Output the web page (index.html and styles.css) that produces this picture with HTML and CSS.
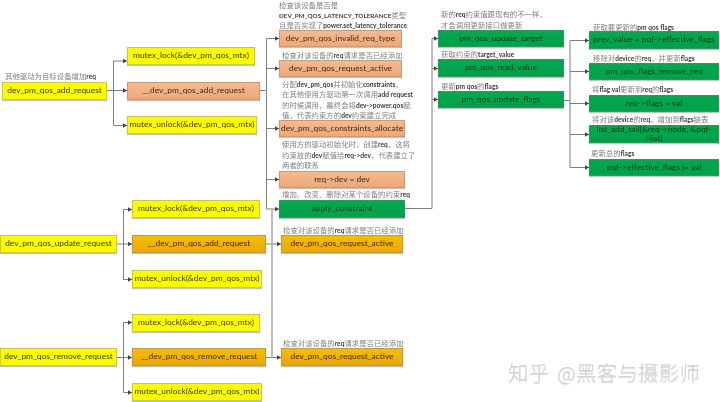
FILE: index.html
```html
<!DOCTYPE html>
<html lang="zh">
<head>
<meta charset="utf-8">
<title>dev_pm_qos</title>
<link rel="stylesheet" href="styles.css">
</head>
<body>
<main class="canvas">
  <svg class="wires" width="720" height="402" viewBox="0 0 720 402">
    <defs>
      <marker id="arrow" markerUnits="userSpaceOnUse" markerWidth="5" markerHeight="5" refX="4" refY="2.5" orient="auto">
        <path d="M0 0.3L4 2.5L0 4.7Z" fill="#404040"/>
      </marker>
    </defs>
    <g class="wire">
      <path d="M107 90.5H113.500"/>
      <path d="M113.500 90.500H127" marker-end="url(#arrow)"/>
      <path d="M113.500 61V125" />
      <path d="M113.500 61H127" marker-end="url(#arrow)"/>
      <path d="M113.500 125.500H127" marker-end="url(#arrow)"/>
      <path d="M260 90.500H266.500"/>
      <path d="M266.500 38.500V209"/>
      <path d="M266.500 38.500H279" marker-end="url(#arrow)"/>
      <path d="M266.500 68.500H279" marker-end="url(#arrow)"/>
      <path d="M266.500 128.500H279" marker-end="url(#arrow)"/>
      <path d="M266.500 179.500H279" marker-end="url(#arrow)"/>
      <path d="M266.500 209H279" marker-end="url(#arrow)"/>
      <path d="M405 208.500H432V38.500"/>
      <path d="M432 38.500H438" marker-end="url(#arrow)"/>
      <path d="M432 68.500H438" marker-end="url(#arrow)"/>
      <path d="M432 99.500H438" marker-end="url(#arrow)"/>
      <path d="M563 100.500H570"/>
      <path d="M570 40.500V167.500"/>
      <path d="M570 40.500H589" marker-end="url(#arrow)"/>
      <path d="M570 71.500H589" marker-end="url(#arrow)"/>
      <path d="M570 103.500H589" marker-end="url(#arrow)"/>
      <path d="M570 134.500H589" marker-end="url(#arrow)"/>
      <path d="M570 167.500H589" marker-end="url(#arrow)"/>
      <path d="M117 244H123.500"/>
      <path d="M123.500 209.500V279.500"/>
      <path d="M123.500 209.500H132" marker-end="url(#arrow)"/>
      <path d="M123.500 244H132" marker-end="url(#arrow)"/>
      <path d="M123.500 279.500H132" marker-end="url(#arrow)"/>
      <path d="M117 357.500H123.500"/>
      <path d="M123.500 322.500V392.500"/>
      <path d="M123.500 322.500H132" marker-end="url(#arrow)"/>
      <path d="M123.500 357.500H132" marker-end="url(#arrow)"/>
      <path d="M123.500 392.500H132" marker-end="url(#arrow)"/>
      <path d="M266 244H281" marker-end="url(#arrow)"/>
      <path d="M266 357.500H281" marker-end="url(#arrow)"/>
      <path class="wire-light" d="M272 209V357.500"/>
    </g>
  </svg>

  <div class="node yellow n-add">dev_pm_qos_add_request</div>
  <div class="node yellow n-lock1">mutex_lock(&amp;dev_pm_qos_mtx)</div>
  <div class="node salmon n-inner1">__dev_pm_qos_add_request</div>
  <div class="node yellow n-unlock1">mutex_unlock(&amp;dev_pm_qos_mtx)</div>

  <div class="node salmon n-invalid">dev_pm_qos_invalid_req_type</div>
  <div class="node salmon n-active1">dev_pm_qos_request_active</div>
  <div class="node salmon n-alloc">dev_pm_qos_constraints_allocate</div>
  <div class="node salmon n-reqdev">req-&gt;dev = dev</div>
  <div class="node green n-apply">apply_constraint</div>

  <div class="node green n-target">pm_qos_update_target</div>
  <div class="node green n-read">pm_qos_read_value</div>
  <div class="node green n-flags">pm_qos_update_flags</div>

  <div class="node green n-prev">prev_value = pqf-&gt;effective_flags</div>
  <div class="node green n-remove">pm_qos_flags_remove_req</div>
  <div class="node green n-val">req-&gt;flags = val</div>
  <div class="node green n-list">list_add_tail(&amp;req-&gt;node, &amp;pqf-<br>&gt;list)</div>
  <div class="node green n-eff">pqf-&gt;effective_flags |= val</div>

  <div class="node yellow n-update">dev_pm_qos_update_request</div>
  <div class="node yellow n-lock2">mutex_lock(&amp;dev_pm_qos_mtx)</div>
  <div class="node orange n-inner2">__dev_pm_qos_add_request</div>
  <div class="node yellow n-unlock2">mutex_unlock(&amp;dev_pm_qos_mtx)</div>
  <div class="node orange n-active2">dev_pm_qos_request_active</div>

  <div class="node yellow n-rem">dev_pm_qos_remove_request</div>
  <div class="node yellow n-lock3">mutex_lock(&amp;dev_pm_qos_mtx)</div>
  <div class="node orange n-inner3">__dev_pm_qos_remove_request</div>
  <div class="node yellow n-unlock3">mutex_unlock(&amp;dev_pm_qos_mtx)</div>
  <div class="node orange n-active3">dev_pm_qos_request_active</div>

  <p class="note t-add">其他驱动为目标设备增加<b>req</b></p>
  <p class="note t-invalid">检查该设备是否是<br><b class="caps">DEV_PM_QOS_LATENCY_TOLERANCE</b>类型<br>且是否实现了<b>power.set_latency_tolerance</b></p>
  <p class="note t-active1">检查对该设备的<b>req</b>请求是否已经添加</p>
  <p class="note t-alloc">分配<b>dev_pm_qos</b>并初始化<b>constraints</b>，<br>在其他使用方驱动第一次调用<b>add request</b><br>的时候调用，最终会将<b>dev-&gt;power.qos</b>赋<br>值，代表约束方的<b>dev</b>约束建立完成</p>
  <p class="note t-reqdev">使用方的驱动初始化时，创建<b>req</b>，这将<br>约束放的<b>dev</b>赋值给<b>req-&gt;dev</b>，代表建立了<br>两者的联系</p>
  <p class="note t-apply">增加、改变、删除对某个设备的约束<b>req</b></p>
  <p class="note t-active2">检查对该设备的<b>req</b>请求是否已经添加</p>
  <p class="note t-active3">检查对该设备的<b>req</b>请求是否已经添加</p>
  <p class="note t-target">新的<b>req</b>约束值跟现有的不一样，<br>才会调用更新接口做更新</p>
  <p class="note t-read">获取约束的<b>target_value</b></p>
  <p class="note t-flags">更新<b>pm qos</b>的<b>flags</b></p>
  <p class="note t-prev">获取要更新的<b>pm qos flags</b></p>
  <p class="note t-remove">移除对<b>device</b>的<b>req</b>，并更新<b>flags</b></p>
  <p class="note t-val">将<b>flag val</b>更新到<b>req</b>的<b>flags</b></p>
  <p class="note t-list">将对该<b>device</b>的<b>req</b>，增加到<b>flags</b>链表</p>
  <p class="note t-eff">更新总的<b>flags</b></p>

  <p class="mark">知乎 @黑客与摄影师</p>
</main>
</body>
</html>
```

FILE: styles.css
```css
* { box-sizing: border-box; }

html, body {
  margin: 0;
  padding: 0;
  background: #fff;
}

.canvas {
  position: relative;
  width: 720px;
  height: 402px;
  overflow: hidden;
  background: #fff;
  font-family: Lato, "Noto Sans", "Noto Sans CJK SC", sans-serif;
  filter: blur(0.35px);
}

.wires {
  position: absolute;
  inset: 0;
}

.wire path {
  fill: none;
  stroke: #7f7f7f;
  stroke-width: 1;
}

.wire .wire-light {
  stroke: #a9a9ad;
  stroke-width: 1.5;
}

.node {
  position: absolute;
  display: flex;
  align-items: center;
  justify-content: center;
  text-align: center;
  font-size: 8.4px;
  line-height: 9.5px;
  color: #3a3a10;
  border: 1px solid;
  box-shadow: 0 1px 1px rgba(120, 120, 120, 0.45);
  white-space: nowrap;
}

.yellow {
  background: #fbfb00;
  border-color: #c8c84c;
  color: #3b3b00;
}

.salmon {
  background: linear-gradient(#f6b98f, #eea877);
  border-color: #c99a78;
  color: #3c2c1c;
}

.green {
  background: linear-gradient(#05a84e, #00a04a);
  border-color: #2c9a60;
  color: #0b3d1e;
}

.orange {
  background: linear-gradient(#f5bd05, #eaa808);
  border-color: #c09a38;
  color: #3c2c00;
}

.n-add { left: 2px; top: 82px; width: 105px; height: 18px; }
.n-lock1 { left: 127px; top: 47px; width: 128px; height: 18px; }
.n-inner1 { left: 127px; top: 82px; width: 133px; height: 18px; }
.n-unlock1 { left: 127px; top: 116px; width: 130px; height: 18px; }

.n-invalid { left: 279px; top: 30px; width: 123px; height: 17px; }
.n-active1 { left: 279px; top: 60px; width: 123px; height: 17px; }
.n-alloc { left: 279px; top: 120px; width: 126px; height: 17px; }
.n-reqdev { left: 279px; top: 171px; width: 126px; height: 17px; }
.n-apply { left: 279px; top: 200px; width: 126px; height: 18px; }

.n-target { left: 438px; top: 30px; width: 126px; height: 17px; }
.n-read { left: 438px; top: 59px; width: 126px; height: 18px; }
.n-flags { left: 438px; top: 91px; width: 126px; height: 17px; }

.n-prev { left: 589px; top: 31px; width: 130px; height: 18px; }
.n-remove { left: 589px; top: 63px; width: 130px; height: 17px; }
.n-val { left: 589px; top: 95px; width: 130px; height: 17px; }
.n-list { left: 589px; top: 125px; width: 130px; height: 18px; }
.n-eff { left: 589px; top: 159px; width: 130px; height: 17px; }

.n-update { left: 0; top: 235px; width: 117px; height: 18px; }
.n-lock2 { left: 132px; top: 200px; width: 128px; height: 18px; }
.n-inner2 { left: 132px; top: 235px; width: 134px; height: 18px; }
.n-unlock2 { left: 132px; top: 270px; width: 130px; height: 18px; }
.n-active2 { left: 281px; top: 235px; width: 122px; height: 18px; }

.n-rem { left: 0; top: 348px; width: 117px; height: 18px; }
.n-lock3 { left: 132px; top: 314px; width: 128px; height: 18px; }
.n-inner3 { left: 132px; top: 348px; width: 134px; height: 18px; }
.n-unlock3 { left: 132px; top: 383px; width: 130px; height: 18px; }
.n-active3 { left: 281px; top: 348px; width: 122px; height: 18px; }

.note {
  position: absolute;
  margin: 0;
  font-family: "Noto Sans CJK SC", sans-serif;
  font-size: 7.4px;
  line-height: 9.6px;
  color: #808080;
  white-space: nowrap;
}

.note b {
  font-family: Lato, "Noto Sans", sans-serif;
  font-size: 6.6px;
  font-weight: 700;
  color: #3c3c3c;
}

.note .caps {
  font-size: 6.3px;
}

.t-add { left: 5px; top: 71px; }
.t-invalid { left: 279px; top: 0; }
.t-active1 { left: 282px; top: 50px; }
.t-alloc { left: 282px; top: 79px; line-height: 9.3px; }
.t-reqdev { left: 282px; top: 139px; }
.t-apply { left: 282px; top: 189px; }
.t-active2 { left: 283px; top: 225px; }
.t-active3 { left: 283px; top: 338px; }
.t-target { left: 441px; top: 9px; }
.t-read { left: 441px; top: 49px; }
.t-flags { left: 441px; top: 81px; }
.t-prev { left: 593px; top: 22px; }
.t-remove { left: 593px; top: 53px; }
.t-val { left: 592px; top: 84px; }
.t-list { left: 592px; top: 114px; }
.t-eff { left: 591px; top: 148px; }

.mark {
  position: absolute;
  left: 508px;
  top: 358px;
  margin: 0;
  font-family: "Noto Sans CJK SC", sans-serif;
  font-size: 20.4px;
  font-weight: 300;
  line-height: 28px;
  letter-spacing: 0.3px;
  word-spacing: 3px;
  color: #d2d2d2;
  text-shadow: 0 1px 1px rgba(130, 130, 130, 0.3);
  white-space: nowrap;
}
```
